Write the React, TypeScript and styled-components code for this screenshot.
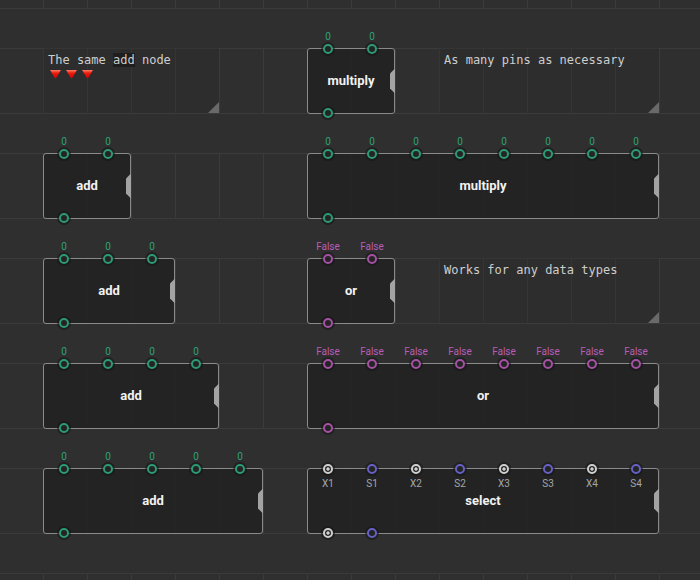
import React from 'react';
import styled, { createGlobalStyle, css } from 'styled-components';

const LINE = '#3b3b3b';
const BG = '#2f2f2f';

type PinType = 'number' | 'boolean' | 'generic' | 'pulse';

const PIN_COLORS: Record<PinType, string> = {
  number: '#2c9a74',
  boolean: '#a451a4',
  generic: '#cfcfcf',
  pulse: '#6660c4',
};

const VALUE_COLORS: Record<PinType, string> = {
  number: '#2fa07a',
  boolean: '#b75db7',
  generic: '#b0b0b0',
  pulse: '#8a85d6',
};

const Global = createGlobalStyle`
  html, body { margin: 0; padding: 0; background: ${BG}; }
  body { width: 700px; height: 580px; overflow: hidden; font-family: Roboto, "Liberation Sans", sans-serif; }
`;

const Canvas = styled.div`
  width: 700px;
  height: 580px;
  overflow: hidden;
  background: ${BG};
  display: flex;
  flex-direction: column;
`;

const SlotLane = styled.div<{ $h?: number; $noLine?: boolean }>`
  flex: none;
  height: ${(p) => p.$h ?? 65}px;
  display: grid;
  grid-template-columns: 43px repeat(15, 44px);
  grid-template-rows: 65px;
  background-image: ${(p) => (p.$noLine ? '' : `linear-gradient(to bottom, ${LINE} 1px, transparent 1px),`)}
    repeating-linear-gradient(to right, transparent 0 43px, ${LINE} 43px 44px);
`;

const GapLane = styled.div`
  flex: none;
  height: 40px;
  background-image: linear-gradient(to bottom, ${LINE} 1px, transparent 1px);
`;

const Node = styled.div<{ $col: number; $span: number }>`
  grid-column: ${(p) => p.$col} / span ${(p) => p.$span};
  grid-row: 1;
  align-self: start;
  position: relative;
  box-sizing: border-box;
  height: 66px;
  padding-bottom: 2px;
  border: 1px solid #8a8a8a;
  border-radius: 3px;
  background: rgba(33, 33, 33, 0.8);
  display: flex;
  align-items: center;
  justify-content: center;
  color: #f2f2f2;
  font: 700 13px Roboto, "Liberation Sans", sans-serif;
`;

const Notch = styled.span`
  position: absolute;
  right: -1px;
  top: 50%;
  width: 5px;
  height: 25px;
  transform: translateY(-50%);
  background: #a3a3a3;
  clip-path: polygon(100% 0, 100% 100%, 0 calc(100% - 5px), 0 5px);
`;

const PinRow = styled.div<{ $bottom?: boolean }>`
  position: absolute;
  left: -2px;
  display: flex;
  ${(p) =>
    p.$bottom
      ? css`
          bottom: -5px;
        `
      : css`
          top: -18px;
        `}
`;

const PinSlot = styled.div`
  width: 44px;
  display: flex;
  flex-direction: column;
  align-items: center;
`;

const PinValue = styled.div<{ $type: PinType }>`
  height: 11px;
  line-height: 11px;
  margin-bottom: 2px;
  font: 400 10px/11px Roboto, "Liberation Sans", sans-serif;
  color: ${(p) => VALUE_COLORS[p.$type]};
  white-space: nowrap;
`;

const PinLabel = styled.div`
  margin-top: 4px;
  font: 400 10px/11px Roboto, "Liberation Sans", sans-serif;
  color: #a6a6a6;
  white-space: nowrap;
`;

const Dot = styled.span<{ $type: PinType }>`
  box-sizing: border-box;
  display: block;
  width: 10px;
  height: 10px;
  border-radius: 50%;
  border: 2px solid ${(p) => PIN_COLORS[p.$type]};
  box-shadow: 0 0 0 2px rgba(22, 22, 22, 0.55);
  background: ${(p) =>
    p.$type === 'generic'
      ? `radial-gradient(circle, ${PIN_COLORS.generic} 0 1.4px, #242424 1.9px)`
      : '#242424'};
`;

const Comment = styled.div<{ $col: number; $span: number }>`
  grid-column: ${(p) => p.$col} / span ${(p) => p.$span};
  grid-row: 1;
  position: relative;
  box-sizing: border-box;
  height: 65px;
  padding: 5px 5px;
  background: rgba(44, 44, 44, 0.35);
  font: 400 12px/15px "DejaVu Sans Mono", "Liberation Mono", monospace;
  color: #cdcdcd;
  white-space: nowrap;
`;

const Code = styled.code`
  font: inherit;
  background: #1e1e1e;
`;

const ResizeHandle = styled.span`
  position: absolute;
  right: 0;
  bottom: 0;
  width: 11px;
  height: 11px;
  background: #696969;
  clip-path: polygon(100% 0, 100% 100%, 0 100%);
`;

const Marks = styled.div`
  display: flex;
  gap: 5px;
  margin-top: 2px;
  padding-left: 2px;
`;

const RedTriangle = styled.span`
  display: block;
  width: 11px;
  height: 9px;
  background: linear-gradient(to bottom, #ff7a6a 0, #f01a0a 35%, #c80000 100%);
  clip-path: polygon(0 0, 100% 0, 50% 100%);
`;

interface InPin {
  type: PinType;
  value?: string;
  label?: string;
}

interface NodeSpec {
  kind: 'node';
  col: number;
  span: number;
  title: string;
  inputs: InPin[];
  outputs: PinType[];
}

interface CommentSpec {
  kind: 'comment';
  col: number;
  span: number;
  content: React.ReactNode;
}

type Item = NodeSpec | CommentSpec;

const nums = (n: number): InPin[] => Array.from({ length: n }, () => ({ type: 'number', value: '0' }));
const bools = (n: number): InPin[] => Array.from({ length: n }, () => ({ type: 'boolean', value: 'False' }));

const selectPins: InPin[] = ['X1', 'S1', 'X2', 'S2', 'X3', 'S3', 'X4', 'S4'].map((l) => ({
  type: l.startsWith('X') ? 'generic' : 'pulse',
  label: l,
}));

const rows: Item[][] = [
  [
    {
      kind: 'comment',
      col: 2,
      span: 4,
      content: (
        <>
          <div>
            The same <Code>add</Code> node
          </div>
          <Marks>
            <RedTriangle />
            <RedTriangle />
            <RedTriangle />
          </Marks>
        </>
      ),
    },
    { kind: 'node', col: 8, span: 2, title: 'multiply', inputs: nums(2), outputs: ['number'] },
    { kind: 'comment', col: 11, span: 5, content: <div>As many pins as necessary</div> },
  ],
  [
    { kind: 'node', col: 2, span: 2, title: 'add', inputs: nums(2), outputs: ['number'] },
    { kind: 'node', col: 8, span: 8, title: 'multiply', inputs: nums(8), outputs: ['number'] },
  ],
  [
    { kind: 'node', col: 2, span: 3, title: 'add', inputs: nums(3), outputs: ['number'] },
    { kind: 'node', col: 8, span: 2, title: 'or', inputs: bools(2), outputs: ['boolean'] },
    { kind: 'comment', col: 11, span: 5, content: <div>Works for any data types</div> },
  ],
  [
    { kind: 'node', col: 2, span: 4, title: 'add', inputs: nums(4), outputs: ['number'] },
    { kind: 'node', col: 8, span: 8, title: 'or', inputs: bools(8), outputs: ['boolean'] },
  ],
  [
    { kind: 'node', col: 2, span: 5, title: 'add', inputs: nums(5), outputs: ['number'] },
    { kind: 'node', col: 8, span: 8, title: 'select', inputs: selectPins, outputs: ['generic', 'pulse'] },
  ],
];

function PatchNode({ spec }: { spec: NodeSpec }) {
  return (
    <Node $col={spec.col} $span={spec.span}>
      <PinRow>
        {spec.inputs.map((p, i) => (
          <PinSlot key={i}>
            <PinValue $type={p.type}>{p.value ?? '\u00a0'}</PinValue>
            <Dot $type={p.type} />
            {p.label && <PinLabel>{p.label}</PinLabel>}
          </PinSlot>
        ))}
      </PinRow>
      {spec.title}
      <Notch />
      <PinRow $bottom>
        {spec.outputs.map((t, i) => (
          <PinSlot key={i}>
            <Dot $type={t} />
          </PinSlot>
        ))}
      </PinRow>
    </Node>
  );
}

export default function App() {
  return (
    <>
      <Global />
      <Canvas>
        <SlotLane $h={8} $noLine />
        <GapLane />
        {rows.map((row, r) => (
          <React.Fragment key={r}>
            <SlotLane>
              {row.map((item, i) =>
                item.kind === 'node' ? (
                  <PatchNode key={i} spec={item} />
                ) : (
                  <Comment key={i} $col={item.col} $span={item.span}>
                    {item.content}
                    <ResizeHandle />
                  </Comment>
                )
              )}
            </SlotLane>
            <GapLane />
          </React.Fragment>
        ))}
        <SlotLane $h={7} />
      </Canvas>
    </>
  );
}
